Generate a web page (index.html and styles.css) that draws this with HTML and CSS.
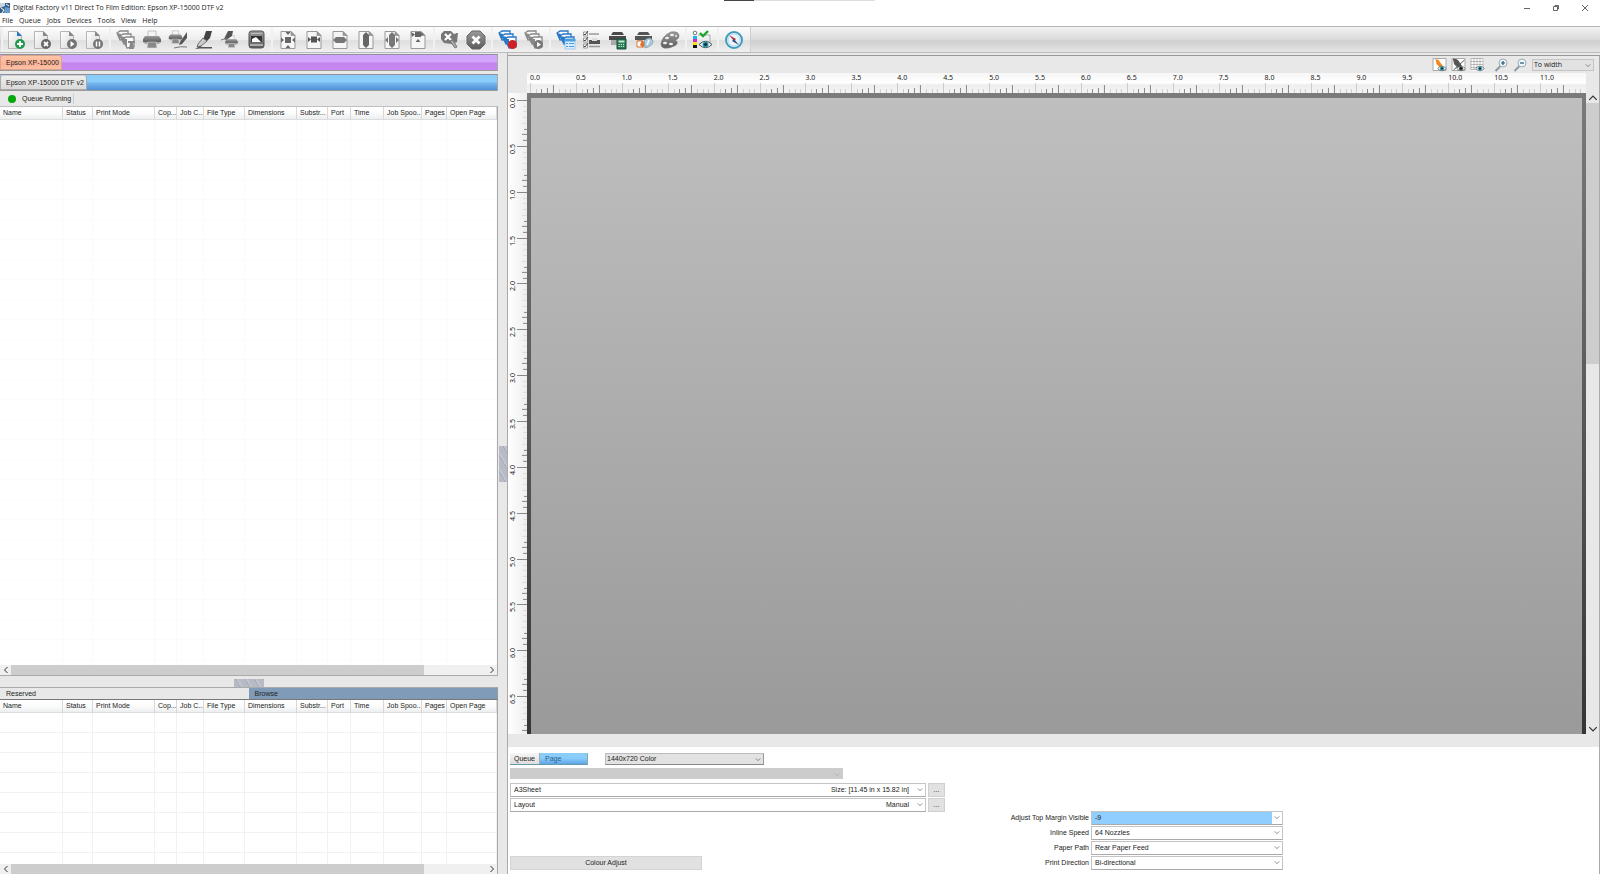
FILE: index.html
```html
<!DOCTYPE html>
<html lang="en">
<head>
<meta charset="utf-8">
<title>Digital Factory v11 Direct To Film Edition</title>
<link rel="stylesheet" href="styles.css">
</head>
<body>
<svg class="defs" aria-hidden="true">
  <defs>
    <linearGradient id="g-dark" x1="0" y1="0" x2="0" y2="1"><stop offset="0" stop-color="#9a9a9a"/><stop offset="1" stop-color="#5c5c5c"/></linearGradient>
    <linearGradient id="g-page" x1="0" y1="0" x2="1" y2="1"><stop offset="0" stop-color="#fff"/><stop offset="1" stop-color="#d6d6d6"/></linearGradient>
    <symbol id="page" viewBox="0 0 20 20"><path d="M2.500 1.500h9l4 4v13h-13z" fill="url(#g-page)" stroke="#b5b5b5"/><path d="M11 1l5 5h-5z" fill="currentColor"/></symbol>
    <symbol id="sheet" viewBox="0 0 20 20"><path d="M3 1.500h10l4 4v13h-14z" fill="#f6f6f6" stroke="#999"/><path d="M13 1.500v4h4z" fill="#999" stroke="#888" stroke-width=".6"/></symbol>
    <symbol id="stack" viewBox="0 0 20 20"><g fill="#fafafa" stroke="currentColor" stroke-width="1.300"><path d="M1 3l3-2h8v8l-8 1z"/><path d="M4 6l3-2h8v9l-7 1z"/><path d="M7 9l3-2h8v10l-7 1z"/></g><path d="M1 3l3 7 1-6M4 6l4 8 1-7M7 9l4 9V9z" fill="currentColor"/></symbol>
    <symbol id="printer" viewBox="0 0 20 20"><path d="M6 1h8v6H6z" fill="#f4f4f4" stroke="#aaa" stroke-width=".7"/><path d="M3 6h14l2 3v3H1V9z" fill="url(#g-dark)"/><path d="M1 12h18l-2 2H3z" fill="#aaa"/><path d="M6 12h8l1 6H5z" fill="#888" stroke="#ddd" stroke-width=".6"/></symbol>
    <symbol id="eye" viewBox="0 0 12 8"><path d="M0 4q6-6 12 0q-6 6-12 0z" fill="#e9f1f3" stroke="#344" stroke-width=".8"/><circle cx="6" cy="4" r="2.700" fill="currentColor"/><circle cx="6" cy="4" r="1.200" fill="#111"/></symbol>
    <symbol id="chev" viewBox="0 0 8 6"><path d="M1 1.500l3 3 3-3" fill="none" stroke="currentColor"/></symbol>
  </defs>
</svg>

<header class="titlebar">
  <svg class="app-icon" viewBox="0 0 10 10"><path d="M0 0h10v10H0z" fill="#356087"/><path d="M0 0h5v3L0 5z" fill="#c6d7e4"/><path d="M5 4l5 1v5H4z" fill="#6a9cc6"/><path d="M1 5l3 2-2 3M6 1l3 2" stroke="#fff" fill="none"/></svg>
  <h1>Digital Factory v11 Direct To Film Edition: Epson XP-15000 DTF v2</h1>
  <span class="notch"></span>
  <div class="win-buttons">
    <button aria-label="Minimize"><svg viewBox="0 0 8 8"><path d="M1 4.500h6"/></svg></button>
    <button aria-label="Restore"><svg viewBox="0 0 8 8"><path d="M1.500 2.500h4v4h-4zM3 2.500v-1h3.500V5H5.500"/></svg></button>
    <button aria-label="Close"><svg viewBox="0 0 8 8"><path d="M1 1l6 6M7 1L1 7"/></svg></button>
  </div>
</header>
<nav class="menubar">
  <button>File</button><button>Queue</button><button>Jobs</button><button>Devices</button><button>Tools</button><button>View</button><button>Help</button>
</nav>

<div class="toolbar" role="toolbar" aria-label="Main">
  <div class="group">
    <button aria-label="Add job"><svg viewBox="0 0 20 20"><use href="#page" class="c-blue"/><circle cx="14" cy="14" r="5" fill="#1f9a4d"/><path d="M14 11v6M11 14h6" stroke="#fff" stroke-width="1.800"/></svg></button>
    <button aria-label="Delete job"><svg viewBox="0 0 20 20"><use href="#page"/><circle cx="14" cy="14" r="5" fill="#666"/><path d="M12 12l4 4M16 12l-4 4" stroke="#fff" stroke-width="1.800"/></svg></button>
    <button aria-label="Resume job"><svg viewBox="0 0 20 20"><use href="#page"/><circle cx="14" cy="14" r="5" fill="#747474"/><path d="M12.500 11l4 3-4 3z" fill="#fff"/></svg></button>
    <button aria-label="Pause job"><svg viewBox="0 0 20 20"><use href="#page"/><circle cx="14" cy="14" r="5" fill="#747474"/><path d="M12.500 11.500v5M15.500 11.500v5" stroke="#fff" stroke-width="1.500"/></svg></button>
  </div>
  <div class="group">
    <button aria-label="Copy job"><svg viewBox="0 0 20 20"><use href="#stack"/><path d="M12 11h7v2h-2l1 6h-5l1-6h-2z" fill="#888"/></svg></button>
    <button aria-label="Print"><svg viewBox="0 0 20 20"><use href="#printer"/></svg></button>
    <button aria-label="Print and edit"><svg viewBox="0 0 20 20"><use href="#printer" width="15" height="15"/><path d="M19 2v6l-5 6-3 1 1-3z" fill="#555"/><path d="M6 18q7-2 13-1" stroke="#777" fill="none"/></svg></button>
    <button aria-label="Edit"><svg viewBox="0 0 20 20"><path d="M12 1h6l-2 7-4 4-3-2z" fill="#444"/><path d="M9 8l4 3-6 5-4 1 1-3z" fill="#ccc" stroke="#555" stroke-width=".8"/><path d="M1 19l5-3 2 1h10v1.500H6z" fill="#555"/></svg></button>
    <button aria-label="Edit and print"><svg viewBox="0 0 20 20"><use href="#printer" x="4" y="5" width="15" height="14"/><path d="M8 1h5l-1 5-6 4-2-1z" fill="#555"/><path d="M1 10l6-2" stroke="#777"/></svg></button>
    <button aria-label="Archive"><svg viewBox="0 0 20 20"><rect x="3" y="1" width="15" height="17" rx="2.500" fill="url(#g-dark)" stroke="#555"/><path d="M5 3.500h11" stroke="#bbb"/><path d="M5 6h11v6H5z" fill="#333"/><path d="M6 12V9l4-2 5 5z" fill="#fff"/><path d="M4 14h13v2H4z" fill="#aaa"/></svg></button>
  </div>
  <div class="group">
    <button aria-label="Centre both"><svg viewBox="0 0 20 20"><use href="#sheet"/><path d="M7 7h6v6H7zM10 5l2.500-3h-5zM10 15l2.500 3h-5zM3 7.500L6 10l-3 2.500zM17 7.500L14 10l3 2.500z" fill="#666"/></svg></button>
    <button aria-label="Centre horizontally"><svg viewBox="0 0 20 20"><use href="#sheet"/><path d="M7 6.500h6v6H7zM4 7l3 2.500L4 12zM16 7l-3 2.500 3 2.500z" fill="#555"/></svg></button>
    <button aria-label="Fit width"><svg viewBox="0 0 20 20"><use href="#sheet"/><path d="M6 7h8v6H6zM3 10l3-3v6zM17 10l-3-3v6z" fill="#777"/></svg></button>
    <button aria-label="Fit height"><svg viewBox="0 0 20 20"><use href="#sheet"/><path d="M7 5h6v10H7zM10 2l3 3H7zM10 18l3-3H7z" fill="#666"/></svg></button>
    <button aria-label="Fit page"><svg viewBox="0 0 20 20"><use href="#sheet"/><path d="M7 5h6v10H7zM10 2l3 3H7zM10 18l3-3H7zM3 10l3-3v6zM17 10l-3-3v6z" fill="#777"/></svg></button>
    <button aria-label="Align top"><svg viewBox="0 0 20 20"><use href="#sheet"/><path d="M7 2h6v5H7zM3 2l4 2.500L4 7zM16 4l-3 2v-3zM10 9l2.500 3h-5z" fill="#666"/></svg></button>
  </div>
  <div class="group">
    <button aria-label="Cancel and clean"><svg viewBox="0 0 20 20"><path d="M4 1h7l3 3 4-1-1 9-5 2-8-1-3-4V4z" fill="#777"/><path d="M5 4l6 6M11 4l-6 6" stroke="#fff" stroke-width="2.200"/><path d="M10 11l5 7 2-1-4-7zM17 3l-5 8" fill="#aaa" stroke="#777"/></svg></button>
    <button aria-label="Cancel"><svg viewBox="0 0 20 20"><path d="M6 1h8l5 5v8l-5 5H6l-5-5V6z" fill="url(#g-dark)" stroke="#666"/><path d="M6.500 6.500l7 7M13.500 6.500l-7 7" stroke="#fff" stroke-width="2.800"/></svg></button>
  </div>
  <div class="group">
    <button aria-label="Stop queue"><svg viewBox="0 0 20 20"><use href="#stack" class="c-blue"/><circle cx="14.500" cy="14.500" r="4.500" fill="#cf2026"/></svg></button>
    <button aria-label="Start queue"><svg viewBox="0 0 20 20"><use href="#stack"/><circle cx="14.500" cy="14.500" r="4.500" fill="#777"/><path d="M13 12l4 2.500-4 2.500z" fill="#fff"/></svg></button>
  </div>
  <div class="group">
    <button aria-label="Queue list"><svg viewBox="0 0 20 20"><use href="#stack" class="c-blue"/><path d="M9 10h10v9H9z" fill="#d7ebfb" stroke="#8cc0ec" stroke-width=".7"/><path d="M9 9h10v2H9zM10 13.500h2M13 13.500h5M10 16.500h2M13 16.500h5" stroke="#4e9fe0" fill="#4e9fe0"/></svg></button>
    <button aria-label="Checklist"><svg viewBox="0 0 20 20"><path d="M1.500 2h4v4h-4zM1.500 8h4v4h-4zM1.500 14h4v4h-4z" fill="#fff" stroke="#999"/><path d="M2 4l1 1 3-4M2 10l1 1 3-4M2 16l1 1 3-4" fill="none" stroke="#444"/><path d="M7 4h10M7 16.500h11" stroke="#999" stroke-width="1.500"/><path d="M7 10h11v4H7z" fill="#555"/><path d="M10 8h5v3h-5z" fill="#ddd"/></svg></button>
    <button aria-label="Ink cost"><svg viewBox="0 0 20 20"><path d="M5 2h9l2 3H3zM1 6h17v4H1z" fill="#4a4a4a"/><path d="M3 10h7v5H3z" fill="#aaa"/><path d="M9 9h9v10H9z" fill="#277a58" stroke="#1d4e3d"/><path d="M10.500 10.500h6v2h-6z" fill="#bfe8cc"/><path d="M10.500 14.500h6M10.500 16.500h6" stroke="#d8efe0" stroke-dasharray="1.200 1"/></svg></button>
    <button aria-label="Colour printing"><svg viewBox="0 0 20 20"><path d="M5 2h9l2 3H3zM1 6h17v4H1z" fill="#555"/><path d="M3 10h5v4H3z" fill="#aaa"/><path d="M3 11h6v6H3z" fill="#fff" stroke="#e1722d"/><path d="M8 10l3 4-2 4-3-3z" fill="#e1722d"/><path d="M10 11q6-6 9 0q0 5-8 7z" fill="#a9cbe0" stroke="#7790a0" stroke-width=".7"/><path d="M13 15l2-5" stroke="#fff" stroke-width="1.500"/></svg></button>
    <button aria-label="Colour palette"><svg viewBox="0 0 20 20"><path d="M1 14Q2 6 11 2q8-1 8 4 0 3-4 4 4 2 1 5-7 4-12 3-3-1-3-4z" fill="url(#g-dark)" stroke="#777" stroke-width=".7"/><g fill="#eee"><ellipse cx="12" cy="5" rx="2" ry="1.300"/><ellipse cx="7" cy="8" rx="2" ry="1.300"/><ellipse cx="5" cy="13" rx="2" ry="1.300"/><ellipse cx="11" cy="14" rx="2" ry="1.300"/><circle cx="16" cy="6" r="1"/></g></svg></button>
  </div>
  <div class="group">
    <button aria-label="Colour proof"><svg viewBox="0 0 20 20"><path d="M1 6h4v3H1z" fill="#1ab7ea"/><path d="M1 9h4v3H1z" fill="#d42cc0"/><path d="M1 12h4v3H1z" fill="#f6e20d"/><path d="M1 15h4v3H1z" fill="#111"/><circle cx="3" cy="3" r="1.800" fill="#fff" stroke="#777"/><path d="M6 5h12v8" fill="none" stroke="#aaa"/><path d="M8 3l3 3 5-5" fill="none" stroke="#18a72a" stroke-width="2.300"/><use href="#eye" class="c-teal" x="7" y="10" width="13" height="9"/></svg></button>
  </div>
  <div class="group">
    <button aria-label="Compass"><svg viewBox="0 0 20 20"><circle cx="10" cy="10" r="8" fill="#edf4f7" stroke="#3f9cc0" stroke-width="2"/><circle cx="10" cy="10" r="6" fill="none" stroke="#b5d8e6"/><path d="M5 5l7 4-2 2z" fill="#b5333c"/><path d="M15 15l-7-4 2-2z" fill="#2f4f86"/></svg></button>
  </div>
</div>

<main class="workspace">
  <section class="jobs">
    <div class="strip purple"><button class="tab orange">Epson XP-15000</button></div>
    <div class="strip blue"><button class="tab silver">Epson XP-15000 DTF v2</button></div>
    <div class="status"><i class="dot"></i><span>Queue Running</span></div>
    <div class="table-box upper"><table class="grid" data-rows="28"></table></div>
    <div class="hscroll"><button aria-label="Scroll left"><svg class="turn-right" viewBox="0 0 8 6"><use href="#chev"/></svg></button><span class="track"><i class="thumb"></i></span><button aria-label="Scroll right"><svg class="turn-left" viewBox="0 0 8 6"><use href="#chev"/></svg></button></div>
    <div class="hsplit"><span class="handle"></span></div>
    <div class="pair"><button>Reserved</button><button class="active">Browse</button></div>
    <div class="table-box lower"><table class="grid" data-rows="8"></table></div>
    <div class="hscroll last"><button aria-label="Scroll left"><svg class="turn-right" viewBox="0 0 8 6"><use href="#chev"/></svg></button><span class="track"><i class="thumb"></i></span><button aria-label="Scroll right"><svg class="turn-left" viewBox="0 0 8 6"><use href="#chev"/></svg></button></div>
  </section>
  <div class="vsplit"><span class="handle"></span></div>
  <section class="preview">
    <div class="view-tools">
      <button aria-label="Show colour"><svg viewBox="0 0 14 14"><path d="M.5.5h13v12H.5z" fill="#fff" stroke="#aaa"/><path d="M3 1l3 1 5 7-3 1-4-4z" fill="#f2851c"/><use href="#eye" class="c-teal" x="5" y="7" width="9" height="7"/></svg></button>
      <button aria-label="Show white"><svg viewBox="0 0 14 14"><path d="M.5.5h13v12H.5z" fill="#fff" stroke="#aaa"/><path d="M2 1l4 1 4 6-3 2-4-4zM13 2L2 12" fill="#555" stroke="#555"/><use href="#eye" x="5" y="7" width="9" height="7"/></svg></button>
      <button aria-label="Show grid"><svg viewBox="0 0 14 14"><path d="M.5.500h13v12H.5z" fill="#fff"/><path d="M.5.500h12v11H.5zM3.500 0v12M6.500 0v12M9.500 0v12M0 3.500h13M0 6.500h13M0 9.500h13" fill="none" stroke="#aaa" stroke-width=".8"/><use href="#eye" class="c-teal" x="5" y="7" width="9" height="7"/></svg></button>
      <span class="gap"></span>
      <button aria-label="Zoom in"><svg viewBox="0 0 14 14"><path d="M6 8l-5 5" stroke="#8b99a3" stroke-width="2"/><circle cx="8.500" cy="5" r="4" fill="#eef5f8" stroke="#9babb5"/><path d="M8.500 3v4M6.500 5h4" stroke="#24566e" stroke-width="1.200"/></svg></button>
      <button aria-label="Zoom out"><svg viewBox="0 0 14 14"><path d="M6 8l-5 5" stroke="#8b99a3" stroke-width="2"/><circle cx="8.500" cy="5" r="4" fill="#eef5f8" stroke="#9babb5"/><path d="M6.500 5h4" stroke="#24566e" stroke-width="1.200"/></svg></button>
      <span class="combo zoom"><select aria-label="Zoom"><option>To width</option></select><svg class="arrow"><use href="#chev"/></svg></span>
    </div>
    <div class="viewport">
      <div class="h-ruler"></div>
      <div class="v-ruler"><div class="v-marks"></div></div>
      <div class="canvas"><div class="film"></div></div>
      <div class="vscroll"><button aria-label="Scroll up"><svg class="flip" viewBox="0 0 8 6"><use href="#chev"/></svg></button><span class="vtrack"><i class="vthumb"></i></span><button aria-label="Scroll down"><svg viewBox="0 0 8 6"><use href="#chev"/></svg></button></div>
    </div>
    <div class="settings">
      <div class="left-form">
        <div class="row mode">
          <div class="mini-tabs"><button class="on">Queue</button><button>Page</button></div>
          <span class="combo gray"><select aria-label="Resolution"><option>1440x720 Color</option></select><svg class="arrow"><use href="#chev"/></svg></span>
        </div>
        <span class="combo off"><select aria-label="Preset" disabled><option></option></select><svg class="arrow"><use href="#chev"/></svg></span>
        <div class="row media"><span class="combo"><select aria-label="Media"><option>A3Sheet</option></select><span class="note">Size: [11.45 in x 15.82 in]</span><svg class="arrow"><use href="#chev"/></svg></span><button>...</button></div>
        <div class="row media"><span class="combo"><select aria-label="Layout"><option>Layout</option></select><span class="note">Manual</span><svg class="arrow"><use href="#chev"/></svg></span><button>...</button></div>
        <button class="adjust">Colour Adjust</button>
      </div>
      <div class="right-form">
        <label for="margin">Adjust Top Margin Visible</label><span class="combo hot"><select id="margin"><option>-9</option></select><svg class="arrow"><use href="#chev"/></svg></span>
        <label for="speed">Inline Speed</label><span class="combo"><select id="speed"><option>64 Nozzles</option></select><svg class="arrow"><use href="#chev"/></svg></span>
        <label for="path">Paper Path</label><span class="combo"><select id="path"><option>Rear Paper Feed</option></select><svg class="arrow"><use href="#chev"/></svg></span>
        <label for="dir">Print Direction</label><span class="combo"><select id="dir"><option>Bi-directional</option></select><svg class="arrow"><use href="#chev"/></svg></span>
      </div>
    </div>
  </section>
</main>
<script src="app.js"></script>
</body>
</html>
```

FILE: styles.css
```css
* { box-sizing: border-box; }
body {
  margin: 0;
  min-height: 100vh;
  display: flex;
  flex-direction: column;
  background: #e8e8e8;
  color: #222;
  font: 7px/10px "Liberation Sans", Arial, sans-serif;
}
button, select { font: inherit; color: inherit; border: 0; padding: 0; margin: 0; background: none; border-radius: 0; }
svg { display: block; }
.defs { position: absolute; width: 0; height: 0; }
.c-blue { color: #2878c8; }
.c-teal { color: #2790a8; }

.titlebar { display: flex; align-items: center; height: 15px; background: #fff; position: relative; }
.app-icon { width: 10px; height: 10px; margin-right: 3px; }
.titlebar h1 { margin: 0; font: 7px/10px "Open Sans", "Noto Sans", sans-serif; }
.notch { position: absolute; top: 0; left: 724px; width: 151px; height: 1px; background: linear-gradient(90deg, #444 30px, #ddd 30px); }
.win-buttons { margin-left: auto; display: flex; padding-right: 1px; }
.win-buttons button { width: 29px; display: grid; place-items: center; }
.win-buttons svg { width: 8px; height: 8px; fill: none; stroke: #666; stroke-width: 1; }
.menubar { display: flex; gap: 6px; padding-left: 2px; height: 11px; background: #fff; }
.menubar button { font: 7px/10px "Open Sans", "Noto Sans", sans-serif; }

.toolbar {
  display: flex;
  height: 27px;
  padding-left: 3px;
  border-top: 1px solid #b5b5b5;
  border-bottom: 1px solid #bbb;
  background: linear-gradient(#f2f2f2, #dadada 50%, #cecece 55%, #e4e4e4);
}
.group { display: flex; background: linear-gradient(#fdfdfd, #ededed 50%, #dfdfdf 55%, #f0f0f0); padding-right: 3px; margin-right: 1px; box-shadow: 1px 0 #cfcfcf, -2px 0 #f1f1f1; }
.group + .group { padding-left: 2px; }
.group button { width: 26px; display: grid; place-items: center; }
.group svg { width: 20px; height: 20px; color: #888; }
.group .c-blue { color: #2878c8; }

.workspace { flex: 1; min-height: 0; display: grid; grid-template-columns: 498fr 10px 1092fr; }
.jobs { display: flex; flex-direction: column; min-width: 0; padding-top: 1px; }
.strip { height: 17px; margin-bottom: 3px; border-top: 1px solid #8f8f9f; border-bottom: 1px solid #999; display: flex; border-right: 1px solid #aaa; }
.purple { background: linear-gradient(#d3a4fb 48%, #c284ec 52%, #c886f0); }
.blue { margin-bottom: 0; background: linear-gradient(#8bcdfa 45%, #74b3ec 55%, #5193d9); }
.tab { padding: 0 2px 0 5px; border: 1px solid #aaa; border-top-color: #ccc; border-radius: 3px 3px 0 0; }
.orange { background: linear-gradient(#ffc5a6, #fdb497 60%, #fbc1a6); border-color: #d9a58c; }
.silver { background: linear-gradient(#efefef, #d9d9d9); }
.status { height: 15px; display: flex; align-items: center; gap: 6px; padding-left: 8px; }
.status span { border-right: 1px solid #ccc; padding-right: 2px; }
.dot { width: 8px; height: 8px; border-radius: 50%; background: #05a80a; }

.table-box { overflow: hidden; background: #fff; border-top: 1px solid #c0c0c0; border-right: 1px solid #aaa; }
.upper { flex: 1 1 0; min-height: 0; }
.lower { height: 165px; border-top-color: #777; }
.grid { width: 100%; table-layout: fixed; border-collapse: separate; border-spacing: 0; }
.grid th { height: 13px; padding: 0 0 0 3px; font-weight: 400; text-align: left; white-space: nowrap; overflow: hidden; text-overflow: clip; background: linear-gradient(#fff, #fcfcfc 50%, #eceeef); border-right: 1px solid #d8d8d8; border-bottom: 1px solid #ddd; }
.grid td { height: 20px; padding: 0; border-right: 1px solid #fafafa; border-bottom: 1px solid #fbfbfb; }
.lower .grid td { border-color: #f1f1f1; }

.hscroll { height: 11px; display: grid; grid-template-columns: 11px 1fr 11px; background: #f0f0f0; border-right: 1px solid #aaa; border-bottom: 1px solid #aaa; }
.hscroll.last { height: 10px; border-bottom: 0; }
.hscroll button, .vscroll button { display: grid; place-items: center; color: #333; }
.hscroll svg { width: 8px; height: 6px; }
.turn-right { transform: rotate(90deg); }
.turn-left { transform: rotate(-90deg); }
.flip { transform: rotate(180deg); }
.track { display: flex; }
.thumb { width: 87%; background: #cdcdcd; }
.hsplit { height: 11px; display: flex; justify-content: center; align-items: flex-end; }
.handle { background: repeating-linear-gradient(60deg, #b6bbc6 0 5px, #a9aeb9 5px 6px, #c0c4ce 6px 8px); }
.hsplit .handle { width: 30px; height: 8px; }
.pair { height: 12px; display: grid; grid-template-columns: 1fr 1fr; border-top: 1px solid #aaa; border-right: 1px solid #999; }
.pair button { text-align: left; padding-left: 6px; }
.pair .active { background: #809bb8; }

.vsplit { display: flex; align-items: center; justify-content: flex-end; border-right: 1px solid #aaa; }
.vsplit .handle { width: 8px; height: 36px; }

.preview { display: flex; flex-direction: column; min-width: 0; border-top: 1px solid #999; border-right: 1px solid #aaa; margin-top: 2px; }
.view-tools { height: 17px; display: flex; justify-content: flex-end; align-items: center; gap: 4px; padding-right: 5px; }
.view-tools button svg { width: 15px; height: 14px; color: #444; }
.view-tools .gap { width: 1px; }

.viewport { flex: 1 1 0; min-height: 0; display: grid; grid-template: 20px 1fr / 19px 1fr 13px; }
.h-ruler { grid-column: 2; display: grid; grid-template-columns: repeat(23, 1fr); padding-left: 3px; overflow: hidden; background: linear-gradient(#f6f6f6, #fff 10px, #eee 12px, #f4f4f4); font: 7px/10px "Noto Sans", sans-serif; }
.h-ruler svg { width: 100%; height: 10px; }
.h-ruler div { min-width: 0; }
.v-ruler { grid-row: 2; grid-column: 1; overflow: hidden; background: linear-gradient(90deg, #fff, #eee); font: 7px/8px "Noto Sans", sans-serif; }
.v-marks { height: 642px; margin-top: 7px; display: grid; grid-template-rows: repeat(14, 1fr); }
.v-marks div { display: flex; align-items: flex-start; min-height: 0; }
.v-marks span { writing-mode: vertical-rl; transform: rotate(180deg); width: 8px; margin: -2px 0 0 1px; }
.v-marks svg { width: 10px; height: 100%; }
.canvas { grid-row: 2; grid-column: 2; display: grid; padding: 5px 4px 0; background: linear-gradient(#7b7b7b, #5c5c5c 45%, #353535); }
.film { background: linear-gradient(#bfbfbf, #9a9a9a); }
.vscroll { grid-row: 2; grid-column: 3; display: grid; grid-template-rows: 10px 1fr 10px; }
.vscroll svg { width: 10px; height: 8px; }
.vtrack { display: flex; flex-direction: column; }
.vthumb { height: 42%; background: #cdcdcd; }

.settings { margin-top: 13px; height: 127px; background: #fff; display: grid; grid-template-columns: 443px 1fr; padding: 6px 0 0 2px; }
.left-form { display: flex; flex-direction: column; align-items: flex-start; }
.row { display: flex; }
.mode { gap: 17px; margin-bottom: 3px; }
.mini-tabs { display: flex; width: 78px; height: 12px; background: linear-gradient(#8bcdfa 45%, #5ea5e6); border-right: 1px solid #8aa; border-bottom: 1px solid #69a; }
.mini-tabs button { padding: 0 5px; color: #2a5f8f; }
.mini-tabs .on { padding: 0 4px; background: linear-gradient(#f6f6f6, #ddd); color: #222; border-right: 1px solid #aaa; }
.combo { position: relative; display: flex; border: 1px solid #c4c4c4; height: 13px; background: #fff; }
.combo select { appearance: none; width: 100%; padding: 0 16px 0 3px; outline: 0; }
.combo .arrow { position: absolute; right: 2px; top: 3px; width: 6px; height: 5px; color: #666; pointer-events: none; }
.combo.gray { width: 159px; height: 12px; background: #e2e2e2; border-color: #bbb #999 #888 #bbb; }
.combo.gray select { padding-left: 1px; }
.combo.off { width: 333px; height: 11px; background: #ccc; border-color: #ccc; margin-bottom: 4px; }
.combo.off .arrow { color: #aaa; }
.combo.zoom { width: 62px; height: 12px; background: #e2e2e2; font-family: "Open Sans", sans-serif; }
.combo.zoom select { padding-left: 1px; }
.note { position: absolute; right: 16px; top: 1px; pointer-events: none; }
.media { gap: 2px; margin-bottom: 1px; }
.media .combo { width: 416px; height: 14px; border-bottom-color: #aaa; }
.media button { width: 17px; height: 14px; background: #e1e1e1; border: 1px solid #d0d0d0; }
.adjust { width: 192px; height: 14px; background: #e1e1e1; border: 1px solid #d4d4d4; margin-top: 43px; }
.right-form { display: grid; grid-template-columns: 136px 192px; grid-auto-rows: 14px; gap: 1px 2px; align-content: start; padding-top: 58px; }
.right-form label { text-align: right; line-height: 14px; }
.right-form .combo { height: 14px; border-bottom-color: #aaa; }
.hot select { background: linear-gradient(90deg, #8fceff calc(100% - 10px), #fff calc(100% - 10px)); }
```

FILE: app.js
```js
const columns = [
  ["Name", 63], ["Status", 30], ["Print Mode", 62], ["Cop...", 22], ["Job C...", 27],
  ["File Type", 41], ["Dimensions", 52], ["Substr...", 31], ["Port", 23], ["Time", 33],
  ["Job Spoo...", 38], ["Pages", 25], ["Open Page", 50]
];
document.querySelectorAll(".grid").forEach(table => {
  const total = columns.reduce((sum, c) => sum + c[1], 0);
  const cols = columns.map(c => `<col style="width:${c[1] / total * 100}%">`).join("");
  const heads = columns.map(c => `<th>${c[0]}</th>`).join("");
  const row = `<tr>${"<td></td>".repeat(columns.length)}</tr>`;
  table.innerHTML = `<colgroup>${cols}</colgroup><thead><tr>${heads}</tr></thead><tbody>${row.repeat(+table.dataset.rows)}</tbody>`;
});

const across = `<svg viewBox="0 0 46 10" preserveAspectRatio="none">
  <path d="M.5 0v10M6.500 6v4M29.500 6v4M35.500 6v4M40.500 6v4" stroke="#ccc"/>
  <path d="M11.500 6v4M17.500 5v5M23.500 2v8" stroke="#888"/></svg>`;
const down = `<svg viewBox="0 0 10 46" preserveAspectRatio="none">
  <path d="M6 6.500h4M6 11.500h4M6 17.500h4M5 23.500h5" stroke="#ddd"/>
  <path d="M0 .5h10M7 29.500h3M5 34.500h5M6 40.500h4" stroke="#888"/></svg>`;
const label = i => (i / 2).toFixed(1);
document.querySelector(".h-ruler").innerHTML =
  Array.from({ length: 23 }, (_, i) => `<div>${label(i)}${across}</div>`).join("");
document.querySelector(".v-marks").innerHTML =
  Array.from({ length: 14 }, (_, i) => `<div><span>${label(i)}</span>${down}</div>`).join("");
```
